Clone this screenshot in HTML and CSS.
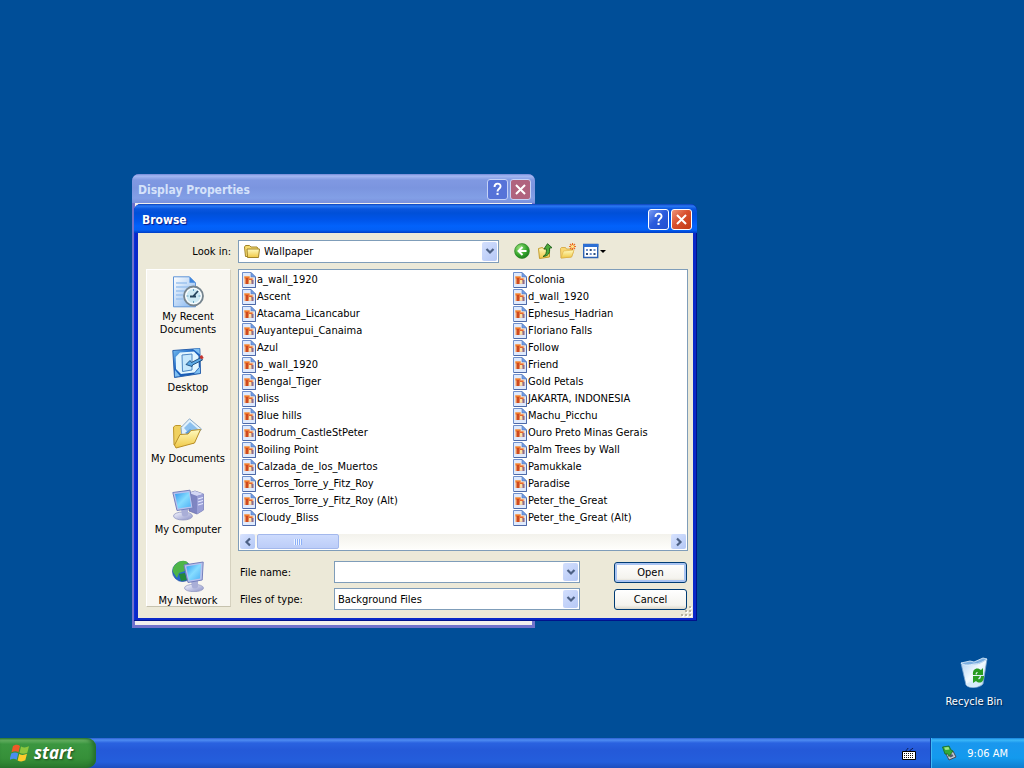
FILE: index.html
```html
<!DOCTYPE html>
<html lang="en">
<head>
    <meta charset="UTF-8">
    <meta name="viewport" content="width=device-width, initial-scale=1.0">
    <title>Browse</title>
    <link rel="stylesheet" href="styles.css">
</head>
<body>
    <!-- shared icons -->
    <svg class="sprite" aria-hidden="true">
        <defs>
            <linearGradient id="gFolder" x1="0" y1="0" x2="0" y2="1"><stop offset="0" stop-color="#fffbc0"/><stop offset="1" stop-color="#f0c845"/></linearGradient>
            <linearGradient id="gPage" x1="0" y1="0" x2="1" y2="1"><stop offset="0" stop-color="#ffffff"/><stop offset="1" stop-color="#7fb2ee"/></linearGradient>
            <linearGradient id="gScreen" x1="0" y1="0" x2="1" y2="1"><stop offset="0" stop-color="#2f97ee"/><stop offset=".5" stop-color="#86dcff"/><stop offset="1" stop-color="#4db0f5"/></linearGradient>
            <linearGradient id="gMetal" x1="0" y1="0" x2="1" y2="1"><stop offset="0" stop-color="#f8f9ff"/><stop offset="1" stop-color="#8a90c8"/></linearGradient>
            <linearGradient id="gDesk" x1="0" y1="0" x2="1" y2="1"><stop offset="0" stop-color="#7cc4f4"/><stop offset=".4" stop-color="#1c66c4"/><stop offset="1" stop-color="#1550a4"/></linearGradient>
            <linearGradient id="gBin" x1="0" y1="0" x2="1" y2="1"><stop offset="0" stop-color="#a9cdf0"/><stop offset=".5" stop-color="#f2faff"/><stop offset="1" stop-color="#a8cbe6"/></linearGradient>
            <radialGradient id="gGreen" cx=".35" cy=".3" r=".8"><stop offset="0" stop-color="#9be27c"/><stop offset=".6" stop-color="#35a52c"/><stop offset="1" stop-color="#14731a"/></radialGradient>
        </defs>
        <symbol id="picture" viewBox="0 0 16 16">
            <path d="M1.500 .5H10L14.500 5v10.500h-13z" fill="#dfeafd" stroke="#6f8fcc"/>
            <path d="M10 .5V5h4.500z" fill="#6f9de8" stroke="#5878b8" stroke-width=".6"/>
            <path d="M14.500 5.500v10H2" fill="none" stroke="#4d69a8"/>
            <path d="M3 4h6v1.500h3.500V12H3z" fill="#f3c9a4"/>
            <path d="M3.500 4.500h5v2h-5z" fill="#ef7a2c"/>
            <path d="M4.500 6h3v6h-3z" fill="#cf4a1e"/>
            <path d="M7.500 6.500h4v3h-4z" fill="#e8662c"/>
            <path d="M8 8h2.500v3H8z" fill="#fbe3a4"/>
            <path d="M10.500 8h2v4h-2z" fill="#8d6c8c"/>
        </symbol>
        <symbol id="question" viewBox="0 0 21 21">
            <path d="M7.200 7.600c0-4.600 6.700-4.600 6.700-.8 0 2.900-3.400 2.700-3.400 5.800" fill="none" stroke="#fff" stroke-width="2.100"/>
            <path d="M9.400 14.200h2.300v2.300H9.400z" fill="#fff"/>
        </symbol>
        <symbol id="cross" viewBox="0 0 21 21">
            <path d="M5.500 5.500l10 10M15.500 5.500l-10 10" stroke="#fff" stroke-width="2.200"/>
        </symbol>
        <symbol id="chevron" viewBox="0 0 10 8">
            <path d="M1.500 2L5 5.500 8.500 2" fill="none" stroke="#4d6185" stroke-width="2.200"/>
        </symbol>
    </svg>

    <main class="desktop">
        <a class="desktop-icon" href="#">
            <svg width="32" height="32" viewBox="0 0 32 32">
                <path d="M3 6c5 3 9 0 13 1 5 0 9-2 13-5l-4 25c-3 4-14 5-17 1z" fill="url(#gBin)" stroke="#7ea6cf" stroke-width=".8"/>
                <path d="M3 6l9-2 4 1 9-4 4 1c-4 3-8 5-13 5-5 1-9 2-13-1z" fill="#7baee0" stroke="#e6f4ff" stroke-width=".8"/>
                <path d="M8 27c4-3 11-4 16-1-3 5-13 6-16 1z" fill="#d7ebfa"/>
                <path d="M15 18c-1-7 5-8 8-5l2-2v7h-7l2-3c-2 0-3 1-2 3z" fill="#279a20"/>
                <path d="M26 19c0 7-5 8-8 5l-3 2v-7h7l-2 3c2 1 3-1 3-3z" fill="#2b9f25"/>
            </svg>
            <span>Recycle Bin</span>
        </a>

        <section class="window window-back">
            <header class="titlebar">
                <h2>Display Properties</h2>
                <button class="caption help" aria-label="Help"><svg><use href="#question"/></svg></button>
                <button class="caption close" aria-label="Close"><svg><use href="#cross"/></svg></button>
            </header>
            <div class="window-body"></div>
        </section>

        <section class="window window-front">
            <header class="titlebar">
                <h1>Browse</h1>
                <button class="caption help" aria-label="Help"><svg><use href="#question"/></svg></button>
                <button class="caption close" aria-label="Close"><svg><use href="#cross"/></svg></button>
            </header>
            <form class="window-body dialog">
                <label class="look-label" for="lookin">Look in:</label>
                <div class="look-row">
                    <div class="combo combo-folder">
                        <select id="lookin"><option>Wallpaper</option></select>
                        <svg class="combo-icon" viewBox="0 0 16 16">
                            <path d="M.5 4l1-1.500h4L7 4h6l1 1.500v8H1.500z" fill="#f7dc70" stroke="#a2852a"/>
                            <path d="M3 6h12.500l-1 8.500H3.500z" fill="url(#gFolder)" stroke="#a2852a"/>
                        </svg>
                        <span class="arrow"><svg><use href="#chevron"/></svg></span>
                    </div>
                    <div class="toolbar">
                        <button type="button" aria-label="Back"><svg viewBox="0 0 16 16">
                            <circle cx="8" cy="8" r="7.400" fill="url(#gGreen)" stroke="#2c8427" stroke-width=".7"/>
                            <path d="M8.500 4L4.500 8l4 4M5 8h7.500" fill="none" stroke="#fff" stroke-width="2"/>
                        </svg></button>
                        <button type="button" aria-label="Up one level"><svg viewBox="0 0 16 16">
                            <path d="M1.500 5.500l4-1 1 1.500 6-1v9l-10 1.500z" fill="url(#gFolder)" stroke="#c39c2e"/>
                            <path d="M6 13.500c3-1.500 3.800-4 3.300-7.500H7L10.500 .7l4.500 4-2.500.5c.800 5-1.500 8-6.500 8.300z" fill="#4dac3c" stroke="#1c5c1a" stroke-width=".9"/>
                        </svg></button>
                        <button type="button" aria-label="New folder"><svg viewBox="0 0 16 16">
                            <path d="M.5 5.500l1-1h4l1 1.500h5v2l2 .500-2 5.500-10.500 1z" fill="#f9d873" stroke="#d2a33b" stroke-width=".8"/>
                            <path d="M3.500 8l10.500-1-2.500 7-10.500 1z" fill="url(#gFolder)" stroke="#dcae45" stroke-width=".6"/>
                            <path d="M12.500 0v7M9 3.500h7M10 1l5 5M15 1l-5 5" stroke="#ec6b1c" stroke-width="1.100"/>
                            <circle cx="12.500" cy="3.500" r="1.600" fill="#ffe88a"/>
                        </svg></button>
                        <button type="button" class="views" aria-label="Views"><svg viewBox="0 0 23 16">
                            <path d="M.7 1.500h14v13H.7z" fill="#fff" stroke="#2c62b5" stroke-width="1.400"/>
                            <path d="M0 1h15.400v3H0z" fill="#2c6fd4"/>
                            <path d="M3 6h2v2H3zM10.500 6h2v2h-2zM6.700 10h2v2h-2z" fill="#6d8fc9"/>
                            <path d="M6.700 6h2v2h-2zM3 10h2v2H3zM10.500 10h2v2h-2z" fill="#2d4f80"/>
                            <path d="M17 7h6l-3 3z" fill="#000"/>
                        </svg></button>
                    </div>
                </div>

                <nav class="places">
                    <a href="#">
                        <svg viewBox="0 0 32 32">
                            <path d="M1.500 .8h16l6 6v24h-22z" fill="url(#gPage)" stroke="#5f94d8"/>
                            <path d="M17.500 .8v6h6z" fill="#3f86de"/>
                            <path d="M4 7h11M4 11h14M4 15h9M4 19h7M4 23h7" stroke="#9cc2ee" stroke-width="1.500"/>
                            <circle cx="21.500" cy="20" r="9.500" fill="#edf5f8" stroke="#76848e" stroke-width="1.800"/>
                            <circle cx="21.500" cy="20" r="7.500" fill="#cdeaf5" stroke="#fff"/>
                            <path d="M21.500 13v2M21.500 25v2M14.500 20h2M26.500 20h2" stroke="#68a4c4"/>
                            <path d="M26 15l-5 5.500M18 20.500h6" stroke="#24455e" stroke-width="1.800"/>
                        </svg>
                        <span>My Recent Documents</span>
                    </a>
                    <a href="#">
                        <svg viewBox="0 0 32 32">
                            <path d="M.8 3.500l27-2 .700 25-26 4z" fill="url(#gDesk)" stroke="#2a62ad"/>
                            <path d="M21 2l6.500-.400.300 6zM3 23l5 6-5 .8zM28 20v6l-6 1z" fill="#7fc0f2"/>
                            <path d="M8 5.500L22 4.500l4.500 4.500.300 11.500-4.300 5L9 27l-5-5-.300-12z" fill="#e2f6ff"/>
                            <path d="M10 8l10-1v16l-9.500 1.500z" fill="#c6e8fc" stroke="#4c86c2"/>
                            <path d="M14 17.500l4-4 1.500 2 9.500-5 1.500 2.500-10 5-.5 1.500z" fill="#5ba9e4" stroke="#194879" stroke-width=".9"/>
                            <path d="M27.500 9.500l2.500-1.500 1.700 3-2.500 1.500z" fill="#c4342f"/>
                        </svg>
                        <span>Desktop</span>
                    </a>
                    <a href="#">
                        <svg viewBox="0 0 32 32">
                            <path d="M1.500 9l2-1.500h5L11 10l12 1-1 14-20 2z" fill="#f0d05e" stroke="#bd962a"/>
                            <path d="M9 9.500L17.500 .8 29.500 11 21 22 10 19z" fill="#e0f1fd" stroke="#8ba8c5"/>
                            <path d="M12 10l6-6 8.500 7.500-7 7z" fill="#8cc0ee"/>
                            <path d="M13 15l5-4 3 2 5-1.500-6 7z" fill="#5d9edc"/>
                            <path d="M2.500 27L8 16.500l8-.5 3-3.500 9.500-1-6 13.500L4 30z" fill="url(#gFolder)" stroke="#b98f28"/>
                        </svg>
                        <span>My Documents</span>
                    </a>
                    <a href="#">
                        <svg viewBox="0 0 32 32">
                            <path d="M17 4l6-2 8.500 3v16L25 25l-8-3z" fill="#7f85c2" stroke="#666ba8" stroke-width=".7"/>
                            <path d="M17 4l6-2 8.500 3L25 7z" fill="#d4d7f4"/>
                            <path d="M25 7l6.500-2v16L25 25z" fill="#9a9fd6"/>
                            <path d="M26 10l5-1.500M26 13l5-1.500M26 16l5-1.500" stroke="#e5e8ff" stroke-width="1.200"/>
                            <ellipse cx="11" cy="27" rx="9.500" ry="4" fill="url(#gMetal)" stroke="#9298c2" stroke-width=".8"/>
                            <path d="M9 20l7-1v7c-2 2-5 2-6 0z" fill="#a9aed7"/>
                            <path d="M.8 3.500L18 1.200l3 17.800-16 2.500z" fill="#b8c2ee" stroke="#7580bd"/>
                            <path d="M3 5L17 3.200l2 14.300-13 2z" fill="url(#gScreen)"/>
                        </svg>
                        <span>My Computer</span>
                    </a>
                    <a href="#">
                        <svg viewBox="0 0 32 32">
                            <circle cx="10.500" cy="11.500" r="10" fill="#2767cc" stroke="#1b4b9e" stroke-width=".7"/>
                            <path d="M4 4c4-4 10-4 12-1l-4 3 1 5-6 2-2 5-4-6c-.500-3 0-6 3-8z" fill="#4eb548"/>
                            <path d="M7 14l6-1 2 7-6 1z" fill="#23883a"/>
                            <ellipse cx="22" cy="28" rx="9.500" ry="3.700" fill="url(#gMetal)" stroke="#9298c2" stroke-width=".8"/>
                            <path d="M19 21l7-1v7c-2 2-5 2-6 0z" fill="#a9aed7"/>
                            <path d="M12 5L31.200 2l-1 18L16 22.500z" fill="#b8c2ee" stroke="#7580bd"/>
                            <path d="M14.300 6.500L29 4l-1 14.500-11 2z" fill="url(#gScreen)"/>
                        </svg>
                        <span>My Network</span>
                    </a>
                </nav>

                <div class="file-panel">
                    <ul class="files">
                        <li><svg><use href="#picture"/></svg>a_wall_1920</li>
                        <li><svg><use href="#picture"/></svg>Ascent</li>
                        <li><svg><use href="#picture"/></svg>Atacama_Licancabur</li>
                        <li><svg><use href="#picture"/></svg>Auyantepui_Canaima</li>
                        <li><svg><use href="#picture"/></svg>Azul</li>
                        <li><svg><use href="#picture"/></svg>b_wall_1920</li>
                        <li><svg><use href="#picture"/></svg>Bengal_Tiger</li>
                        <li><svg><use href="#picture"/></svg>bliss</li>
                        <li><svg><use href="#picture"/></svg>Blue hills</li>
                        <li><svg><use href="#picture"/></svg>Bodrum_CastleStPeter</li>
                        <li><svg><use href="#picture"/></svg>Boiling Point</li>
                        <li><svg><use href="#picture"/></svg>Calzada_de_los_Muertos</li>
                        <li><svg><use href="#picture"/></svg>Cerros_Torre_y_Fitz_Roy</li>
                        <li><svg><use href="#picture"/></svg>Cerros_Torre_y_Fitz_Roy (Alt)</li>
                        <li><svg><use href="#picture"/></svg>Cloudy_Bliss</li>
                        <li><svg><use href="#picture"/></svg>Colonia</li>
                        <li><svg><use href="#picture"/></svg>d_wall_1920</li>
                        <li><svg><use href="#picture"/></svg>Ephesus_Hadrian</li>
                        <li><svg><use href="#picture"/></svg>Floriano Falls</li>
                        <li><svg><use href="#picture"/></svg>Follow</li>
                        <li><svg><use href="#picture"/></svg>Friend</li>
                        <li><svg><use href="#picture"/></svg>Gold Petals</li>
                        <li><svg><use href="#picture"/></svg>JAKARTA, INDONESIA</li>
                        <li><svg><use href="#picture"/></svg>Machu_Picchu</li>
                        <li><svg><use href="#picture"/></svg>Ouro Preto Minas Gerais</li>
                        <li><svg><use href="#picture"/></svg>Palm Trees by Wall</li>
                        <li><svg><use href="#picture"/></svg>Pamukkale</li>
                        <li><svg><use href="#picture"/></svg>Paradise</li>
                        <li><svg><use href="#picture"/></svg>Peter_the_Great</li>
                        <li><svg><use href="#picture"/></svg>Peter_the_Great (Alt)</li>
                    </ul>
                    <div class="scrollbar">
                        <button type="button" class="scroll-btn left" aria-label="Scroll left"><svg><use href="#chevron"/></svg></button>
                        <div class="thumb"><i></i></div>
                        <button type="button" class="scroll-btn right" aria-label="Scroll right"><svg><use href="#chevron"/></svg></button>
                    </div>
                </div>

                <div class="fields">
                    <label for="filename">File name:</label>
                    <div class="combo">
                        <input type="text" id="filename">
                        <span class="arrow"><svg><use href="#chevron"/></svg></span>
                    </div>
                    <button type="submit" class="btn default">Open</button>

                    <label for="filetype">Files of type:</label>
                    <div class="combo">
                        <select id="filetype"><option>Background Files</option></select>
                        <span class="arrow"><svg><use href="#chevron"/></svg></span>
                    </div>
                    <button type="button" class="btn">Cancel</button>
                </div>
                <svg class="grip" viewBox="0 0 11 11">
                    <path d="M9 1h2v2H9zM9 5h2v2H9zM9 9h2v2H9zM5 5h2v2H5zM5 9h2v2H5zM1 9h2v2H1z" fill="#fff"/>
                    <path d="M8 0h2v2H8zM8 4h2v2H8zM8 8h2v2H8zM4 4h2v2H4zM4 8h2v2H4zM0 8h2v2H0z" fill="#b8b4a2"/>
                </svg>
            </form>
        </section>
    </main>

    <footer class="taskbar">
        <button class="start">
            <svg viewBox="0 0 20 20">
                <path d="M3 3c3-1.800 5-1.500 7 0L8.500 9.300C6.500 8 4.500 8 1.500 9.300z" fill="#ee5a28"/>
                <path d="M11 3.500c2.500 1.300 5 1.300 8-.2L17.300 9.700c-3 1.500-5.500 1.400-7.800.1z" fill="#8cc63e"/>
                <path d="M1.200 10.500c3-1.500 5-1.300 7 0L6.700 16.800C4.500 15.500 2.500 15.500-.5 17z" fill="#4a8ef0"/>
                <path d="M9.200 11c2.500 1.300 5 1.300 7.800-.2l-1.700 6.500c-3 1.500-5.300 1.400-7.700.1z" fill="#fccb2c"/>
            </svg>
            <span>start</span>
        </button>
        <svg class="keyboard" viewBox="0 0 14 14">
            <path d="M4 4c0-2 2-1 2-3M8 4c0-2 2-1 3-3" fill="none" stroke="#0c1e50"/>
            <path d="M.5 4.500h13v8H.5z" fill="#fff" stroke="#000"/>
            <path d="M2 6.500h10M2 8.500h10M2 10.500h10" stroke="#111" stroke-width="1" stroke-dasharray="1 1"/>
        </svg>
        <div class="tray">
            <svg viewBox="0 0 16 16">
                <path d="M5 9l7-3 3 6-7 3z" fill="#c3c8d2" stroke="#444b5a"/>
                <path d="M8 10.500l3-1.500 1.500 2-3 1.500z" fill="#545c6c"/>
                <path d="M1.500 2L8 1l2 4 2 1-4 5.500L7 9 4 9z" fill="#34a838" stroke="#1b6a20" stroke-width=".8"/>
                <path d="M3 2.500L7.500 2l1 2.500-4 .5z" fill="#9be684"/>
            </svg>
            <time>9:06 AM</time>
        </div>
    </footer>
</body>
</html>
```
FILE: styles.css
```css
* {
    box-sizing: border-box;
}
body {
    margin: 0;
    height: 100vh;
    display: flex;
    flex-direction: column;
    overflow: hidden;
    background: #004e98;
    font: 11px/13px "DejaVu Sans Condensed", "DejaVu Sans", sans-serif;
    color: #000;
}
button, input, select {
    font: inherit;
    color: inherit;
    margin: 0;
}
button {
    padding: 0;
    border: 0;
    background: none;
}
a {
    color: inherit;
    text-decoration: none;
}
svg {
    display: block;
    flex: none;
}
.sprite {
    position: absolute;
    width: 0;
    height: 0;
}
.desktop {
    position: relative;
    flex: 1;
}

/* desktop icon */
.desktop-icon {
    position: absolute;
    right: 12px;
    bottom: 30px;
    width: 76px;
    display: flex;
    flex-direction: column;
    align-items: center;
    gap: 6px;
    color: #fff;
    text-shadow: 1px 1px 1px #00244c;
}

/* windows */
.window {
    position: absolute;
    display: flex;
    flex-direction: column;
    border-radius: 7px 7px 0 0;
}
.window-back {
    left: 132px;
    top: 174px;
    width: 403px;
    height: 454px;
    padding: 0 3px 3px;
    background: #7072cc;
}
.window-back .window-body {
    flex: 1;
    background: #f1efee;
}
.window-front {
    left: 134px;
    top: 204px;
    width: 563px;
    padding: 0 4px 3px;
    background: #0a28c8;
    box-shadow: inset -1px -1px 0 #00138c, inset 1px 0 0 #0831d9;
}
.titlebar {
    display: flex;
    align-items: center;
    gap: 2px;
    height: 29px;
    margin: 0 -4px;
    padding: 2px 5px 0 8px;
    border-radius: 7px 7px 0 0;
    background: linear-gradient(#0a3fb8 0, #2a78f4 2px, #0a56de 5px, #0050d8 9px, #0055ea 16px, #0262fb 22px, #0360f6 26px, #003dc4 29px);
}
.window-back .titlebar {
    margin: 0 -3px;
    padding: 2px 4px 0 6px;
    background: linear-gradient(#7288d8 0, #a5b8f2 2px, #8099e2 6px, #7b95df 14px, #829fe6 24px, #7a90dc 29px);
}
.titlebar h1,
.titlebar h2 {
    flex: 1;
    margin: 0;
    font-size: 12px;
    line-height: 16px;
    color: #fff;
    text-shadow: 1px 1px 1px #0a1883;
}
.titlebar h2 {
    color: #d5e2fa;
    text-shadow: none;
}
.caption {
    width: 21px;
    height: 21px;
    border: 1px solid #fff;
    border-radius: 3px;
    background: linear-gradient(135deg, #7b9cf2, #2a5bdd 45%, #1f4fd0);
}
.caption svg {
    width: 19px;
    height: 19px;
}
.caption.close {
    background: linear-gradient(135deg, #ee9478, #d8502f 45%, #c23a14);
}
.window-back .caption {
    border-color: #c5d2f7;
    background: #5673d8;
}
.window-back .caption.close {
    background: #b0637e;
}

/* browse dialog */
.dialog {
    position: relative;
    display: grid;
    grid-template-columns: 85px 1fr;
    grid-template-rows: 36px auto auto;
    column-gap: 7px;
    padding: 0 5px 8px 8px;
    background: #ece9d8;
}
.look-label {
    align-self: center;
    text-align: right;
}
.look-row {
    display: flex;
    align-items: center;
    gap: 15px;
}
.combo {
    position: relative;
    height: 22px;
}
.combo-folder {
    width: 261px;
    height: 23px;
}
.combo select,
.combo input {
    display: block;
    width: 100%;
    height: 100%;
    padding: 0 20px 0 3px;
    border: 1px solid #7f9db9;
    border-radius: 0;
    outline: none;
    appearance: none;
    background: #fff;
}
.combo-folder select {
    padding-left: 25px;
}
.combo-icon {
    position: absolute;
    left: 6px;
    top: 3px;
    width: 16px;
    height: 16px;
}
.arrow {
    position: absolute;
    top: 2px;
    right: 2px;
    bottom: 2px;
    width: 15px;
    display: grid;
    place-items: center;
    border-radius: 2px;
    background: linear-gradient(135deg, #d3dffd, #b5c8f6);
    pointer-events: none;
}
.arrow svg,
.scroll-btn svg {
    width: 10px;
    height: 8px;
}
.toolbar {
    display: flex;
    gap: 7px;
}
.toolbar svg {
    width: 16px;
    height: 16px;
}
.toolbar .views svg {
    width: 23px;
}

/* places bar */
.places {
    grid-row: 2 / 4;
    height: 338px;
    padding: 6px 1px 0 0;
    overflow: hidden;
    border: 1px solid #fff;
    border-right-color: #d5d1bf;
    border-bottom-color: #c6c2ae;
    background: #f8f6f0;
}
.places a {
    display: flex;
    flex-direction: column;
    align-items: center;
    gap: 2px;
    height: 71px;
    text-align: center;
}
.places svg {
    width: 32px;
    height: 32px;
}

/* file list */
.file-panel {
    padding: 1px;
    border: 1px solid #7f9db9;
    background: #fff;
}
.files {
    display: grid;
    grid-auto-flow: column;
    grid-template-rows: repeat(15, 17px);
    grid-template-columns: 271px 1fr;
    margin: 0;
    padding: 0 0 8px;
    list-style: none;
}
.files li {
    display: flex;
    align-items: center;
    padding-left: 1px;
    white-space: nowrap;
}
.files svg {
    width: 16px;
    height: 16px;
}
.scrollbar {
    display: flex;
    height: 15px;
    background: linear-gradient(#f3f2ec, #fefefb);
}
.scroll-btn {
    display: grid;
    place-items: center;
    width: 15px;
    border-radius: 2px;
    background: linear-gradient(135deg, #d8e3fe, #b3c7f6);
}
.scroll-btn.left svg {
    transform: rotate(90deg);
}
.scroll-btn.right {
    margin-left: auto;
}
.scroll-btn.right svg {
    transform: rotate(-90deg);
}
.thumb {
    display: grid;
    place-items: center;
    width: 82px;
    margin-left: 2px;
    border: 1px solid #a3b8ec;
    border-radius: 2px;
    background: linear-gradient(#cddbfd, #bccdf8);
}
.thumb i {
    width: 8px;
    height: 6px;
    background: repeating-linear-gradient(90deg, #eef4fe 0 1px, #8cb0f8 1px 2px);
}

/* bottom fields */
.fields {
    display: grid;
    grid-template-columns: 94px 246px 73px;
    align-items: center;
    row-gap: 5px;
    padding: 10px 1px 0 2px;
    justify-content: start;
}
.fields .btn {
    width: 73px;
    margin-left: 34px;
}
.btn {
    height: 21px;
    border: 1px solid #003c74;
    border-radius: 3px;
    background: linear-gradient(#fff, #f4f3ee 80%, #dcd8cc);
}
.btn.default {
    box-shadow: inset 0 0 0 2px #a9c4f2;
}
.grip {
    position: absolute;
    right: 1px;
    bottom: 1px;
    width: 11px;
    height: 11px;
}

/* taskbar */
.taskbar {
    display: flex;
    align-items: stretch;
    height: 30px;
    background: linear-gradient(#2a5fd2 0, #4f8df2 2px, #2a62e0 5px, #2459d8 12px, #245edc 24px, #1d4dbd 30px);
}
.start {
    display: flex;
    align-items: center;
    gap: 4px;
    width: 96px;
    padding-left: 10px;
    border-radius: 0 9px 9px 0;
    background: linear-gradient(#2f7f31 0, #6bb566 2px, #3b9640 6px, #369039 20px, #2b7a2e 30px);
    box-shadow: inset -3px 0 4px #246d2a;
    font: italic bold 17px/22px "Open Sans", "Liberation Sans", sans-serif;
    color: #fff;
    text-shadow: 1px 1px 2px #1c4a1e;
}
.start svg {
    width: 20px;
    height: 20px;
}
.keyboard {
    width: 14px;
    height: 14px;
    margin: 9px 14px 0 auto;
}
.tray {
    display: flex;
    align-items: center;
    gap: 10px;
    padding: 0 16px 0 10px;
    border-left: 1px solid #0f3f9e;
    background: linear-gradient(#1580dc 0, #3cb8f8 2px, #1a97ee 5px, #139aee 20px, #0e7dce 30px);
    box-shadow: inset 1px 0 0 #3fb9f5;
    color: #fff;
}
.tray svg {
    width: 16px;
    height: 16px;
}
```
